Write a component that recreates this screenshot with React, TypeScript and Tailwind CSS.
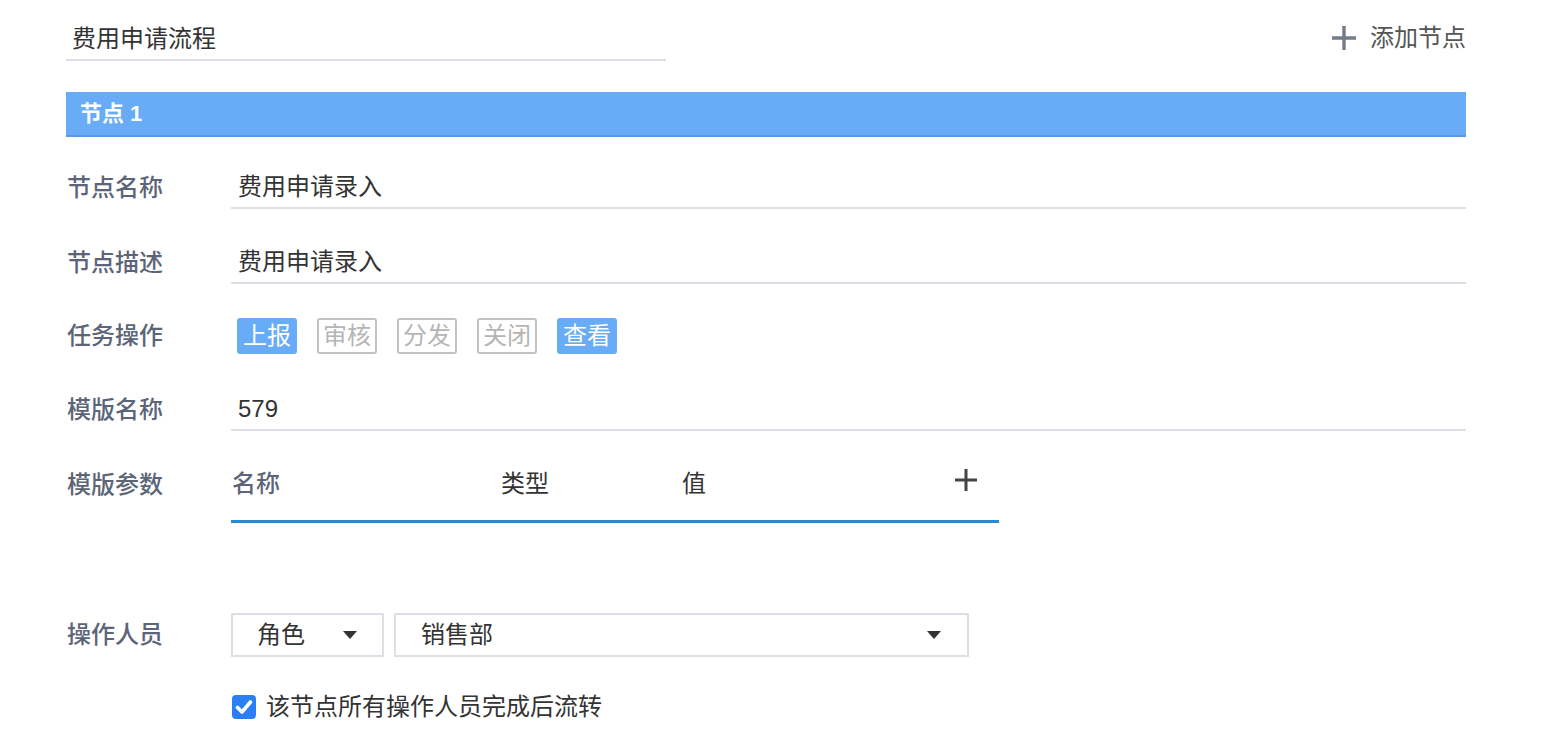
import { useState } from 'react';

const font = { fontFamily: '"Liberation Sans", "Noto Sans CJK SC", sans-serif' };

function Field({ label, children, h = 'h-[75px]' }: { label: string; children: React.ReactNode; h?: string }) {
  return (
    <div className={`flex items-center ${h}`}>
      <div className="w-[165px] shrink-0 pl-[1px] text-[24px] font-medium text-[#5b6577]">{label}</div>
      <div className="flex-1">{children}</div>
    </div>
  );
}

function TextLine({ value }: { value: string }) {
  return (
    <div className="h-[42px] border-b-2 border-[#dcdfe6] flex items-center pl-[7px] text-[24px] text-[#333]">
      {value}
    </div>
  );
}

function Caret() {
  return (
    <svg width="14" height="8" viewBox="0 0 14 8">
      <path d="M0 0h14L7 8z" fill="#333" />
    </svg>
  );
}

export default function App() {
  const ops = [
    { name: '上报', on: true },
    { name: '审核', on: false },
    { name: '分发', on: false },
    { name: '关闭', on: false },
    { name: '查看', on: true },
  ];
  const [done, setDone] = useState(true);

  return (
    <div className="min-h-[744px] bg-white" style={font}>
      <div className="ml-[66px] w-[1400px] pt-[19px]">
        {/* 标题 */}
        <div className="flex items-start justify-between">
          <div className="w-[600px] h-[42px] border-b-2 border-[#dcdfe6] flex items-center pl-[6px] text-[24px] text-[#333]">
            费用申请流程
          </div>
          <button className="flex items-center h-[38px] text-[24px] text-[#555]">
            <svg width="26" height="26" viewBox="0 0 26 26" className="mr-[13px]">
              <path d="M13 1v24M1 13h24" stroke="#737c88" strokeWidth="3.4" />
            </svg>
            添加节点
          </button>
        </div>

        {/* 节点 */}
        <div className="mt-[31px] h-[45px] bg-[#68abf7] border-b-2 border-[#5a9ae2] flex items-center pl-[14px] text-[22px] font-bold text-white">
          节点 1
        </div>

        <div className="mt-[13px]">
          <Field label="节点名称">
            <TextLine value="费用申请录入" />
          </Field>
          <Field label="节点描述">
            <TextLine value="费用申请录入" />
          </Field>
          <Field label="任务操作" h="h-[72px]">
            <div className="flex gap-[20px] pl-[6px]">
              {ops.map((o) =>
                o.on ? (
                  <span
                    key={o.name}
                    className="h-[36px] w-[60px] rounded-[3px] bg-[#68abf7] flex items-center justify-center text-[24px] text-white"
                  >
                    {o.name}
                  </span>
                ) : (
                  <span
                    key={o.name}
                    className="h-[36px] w-[60px] rounded-[3px] border-2 border-[#c2c2c2] flex items-center justify-center text-[24px] text-[#b5b5b5]"
                  >
                    {o.name}
                  </span>
                )
              )}
            </div>
          </Field>
          <Field label="模版名称">
            <TextLine value="579" />
          </Field>

          <div className="flex items-start">
            <div className="w-[165px] shrink-0 pl-[1px] h-[76px] flex items-center text-[24px] font-medium text-[#5b6577]">
              模版参数
            </div>
            <div className="w-[768px]">
              <div className="h-[76px] border-b-[3px] border-[#2a8bd3] flex items-center text-[24px] text-[#333]">
                <span className="w-[270px] pl-[1px] font-medium text-[#5b6577]">名称</span>
                <span className="w-[181px]">类型</span>
                <span className="flex-1">值</span>
                <svg width="24" height="24" viewBox="0 0 24 24" className="mr-[21px] -mt-[8px]">
                  <path d="M12 1v22M1 12h22" stroke="#444" strokeWidth="3" />
                </svg>
              </div>
            </div>
          </div>

          <div className="mt-[90px] flex items-center h-[44px]">
            <div className="w-[165px] shrink-0 pl-[1px] text-[24px] font-medium text-[#5b6577]">操作人员</div>
            <div className="flex gap-[10px]">
              <div className="w-[153px] h-[44px] border-2 border-[#dcdfe6] flex items-center justify-between pl-[24px] pr-[25px] text-[24px] text-[#333]">
                角色
                <Caret />
              </div>
              <div className="w-[575px] h-[44px] border-2 border-[#dcdfe6] flex items-center justify-between pl-[25px] pr-[26px] text-[24px] text-[#333]">
                销售部
                <Caret />
              </div>
            </div>
          </div>

          <label className="mt-[32px] ml-[166px] flex items-center gap-[10px] text-[24px] text-[#333] cursor-pointer" onClick={() => setDone(!done)}>
            <span className={`w-[24px] h-[24px] rounded-[4px] flex items-center justify-center ${done ? 'bg-[#2b7ff5]' : 'border-2 border-[#bbb]'}`}>
              {done && (
                <svg width="18" height="18" viewBox="0 0 18 18">
                  <path d="M2.5 9.5l4.5 4.5L15.5 4" stroke="#fff" strokeWidth="3.6" fill="none" strokeLinecap="round" strokeLinejoin="round" />
                </svg>
              )}
            </span>
            该节点所有操作人员完成后流转
          </label>
        </div>
      </div>
    </div>
  );
}
